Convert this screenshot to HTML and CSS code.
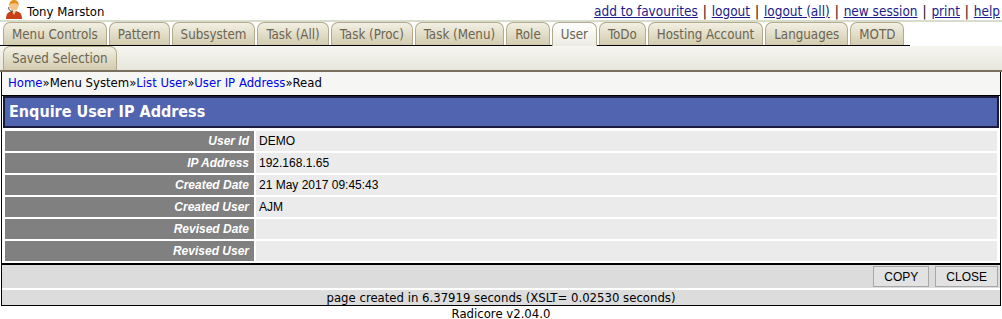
FILE: index.html
```html
<!DOCTYPE html>
<html>
<head>
<meta charset="utf-8">
<link rel="stylesheet" href="styles.css">
</head>
<body>
<div class="top">
  <div class="user">
    <svg class="uicon" width="20" height="20" viewBox="0 0 20 20">
      <path d="M2 20 C2 14 5 12 10 12 C15 12 18 14 18 20 Z" fill="#c8401a"/>
      <path d="M8 12 L10 16 L12 12 Z" fill="#f4d0a0"/>
      <circle cx="10" cy="7" r="4.5" fill="#f5c48a"/>
      <path d="M5.2 7 C5 2.5 8 1 10 1 C13 1 15 3 14.8 7 C14 5 12 4 10 4.5 C8 4 6 5 5.2 7 Z" fill="#e8901c"/>
      <path d="M5 8 C4 10 6 13 9 12" stroke="#333" stroke-width="1" fill="none"/>
    </svg>
    <span class="uname">Tony Marston</span>
  </div>
  <div class="links">
    <a href="#">add to favourites</a> | <a href="#">logout</a> | <a href="#">logout (all)</a> | <a href="#">new session</a> | <a href="#">print</a> | <a href="#">help</a>
  </div>
</div>
<div class="band"></div>
<div class="tabrow1">
  <div class="tabs">
    <span class="tab">Menu Controls</span>
    <span class="tab">Pattern</span>
    <span class="tab">Subsystem</span>
    <span class="tab">Task (All)</span>
    <span class="tab">Task (Proc)</span>
    <span class="tab">Task (Menu)</span>
    <span class="tab">Role</span>
    <span class="tab active">User</span>
    <span class="tab">ToDo</span>
    <span class="tab">Hosting Account</span>
    <span class="tab">Languages</span>
    <span class="tab">MOTD</span>
  </div>
</div>
<div class="tabrow2">
  <span class="tab">Saved Selection</span>
</div>
<div class="main">
  <div class="crumbs"><a href="#">Home</a>»Menu System»<a href="#">List User</a>»<a href="#">User IP Address</a>»Read</div>
  <div class="title">Enquire User IP Address</div>
  <table class="detail">
    <tr><th>User Id</th><td>DEMO</td></tr>
    <tr><th>IP Address</th><td>192.168.1.65</td></tr>
    <tr><th>Created Date</th><td>21 May 2017 09:45:43</td></tr>
    <tr><th>Created User</th><td>AJM</td></tr>
    <tr><th>Revised Date</th><td></td></tr>
    <tr><th>Revised User</th><td></td></tr>
  </table>
  <div class="actions">
    <button class="btn">COPY</button><button class="btn">CLOSE</button>
  </div>
  <div class="timing">page created in 6.37919 seconds (XSLT= 0.02530 seconds)</div>
</div>
<div class="version">Radicore v2.04.0</div>
</body>
</html>
```
FILE: styles.css
```css
html, body { margin: 0; padding: 0; background: #fff; }
body { font-family: "DejaVu Sans Condensed", "DejaVu Sans", sans-serif; font-size: 13px; color: #000; }

.top { display: flex; justify-content: space-between; align-items: flex-end; height: 20px; }
.user { display: flex; align-items: flex-end; padding-left: 4px; }
.uicon { display: block; margin-bottom: 1px; }
.uname { margin-left: 3px; font-size: 13px; line-height: 16px; }
.links { font-size: 13.5px; line-height: 18px; padding-right: 2px; color: #000; word-spacing: 1px; }
.links a { color: #1a1a8c; text-decoration: underline; word-spacing: 0; }

.band { height: 2px; background: #d8dccc; }

.tabrow1 { display: flex; }
.tabs { display: flex; gap: 2px; padding-left: 3px; padding-right: 6px; border-bottom: 1px solid #000; }
.tab {
  display: block; height: 22px; line-height: 23px; padding: 0 8px;
  border: 1px solid #b2aa8a; border-bottom: none; border-radius: 7px 7px 0 0;
  background: linear-gradient(#f2f0e4, #d2cbae);
  color: #6c6452; font-size: 13.25px; white-space: nowrap;
}
.tab.active { background: linear-gradient(#ffffff, #ecebe2); height: 23px; margin-bottom: -1px; }

.tabrow2 {
  display: flex; padding-left: 3px; height: 24px;
  background: linear-gradient(#f6f6f0, #e6e6dc);
  border-bottom: 2px solid #7a7060;
  align-items: flex-end;
}
.tabrow2 .tab { height: 23px; }

.main { margin: 0 1px 0 1px; border: 1px solid #000; border-top: none; }
.crumbs { background: #f6f6f4; height: 23px; line-height: 22px; padding-left: 6px; border-bottom: 1px solid #000; font-size: 13px; }
.crumbs a { color: #0000ee; text-decoration: none; }

.title {
  margin: 0 1px; background: #5064b0; border: 2px solid #1a1a3a;
  color: #fff; font-weight: bold; font-size: 16px; height: 28px; line-height: 28px; padding-left: 4px;
}

.detail { width: calc(100% - 2px); margin: 1px 1px 0 1px; border-collapse: separate; border-spacing: 2px; font-family: "Liberation Sans", Arial, sans-serif; font-size: 12px; }
.detail th { width: 244px; background: #808080; color: #fff; font-weight: bold; font-style: italic; text-align: right; padding: 0 5px 0 0; height: 20px; }
.detail td { background: #ebebeb; padding: 0 3px; height: 20px; }

.actions { border-top: 2px solid #000; background: #dcdcdc; height: 23px; display: flex; justify-content: flex-end; align-items: center; gap: 6px; padding-right: 2px; }
.btn { font-family: "Liberation Sans", Arial, sans-serif; font-size: 12px; height: 21px; padding: 0 10px; background: #e2e2e2; border: 1px solid #a8a8a8; color: #000; }
.timing { border-top: 2px solid #fff; background: #dcdcdc; text-align: center; height: 15px; line-height: 15px; font-size: 13px; }

.version { text-align: center; font-size: 13px; line-height: 15px; }
```
